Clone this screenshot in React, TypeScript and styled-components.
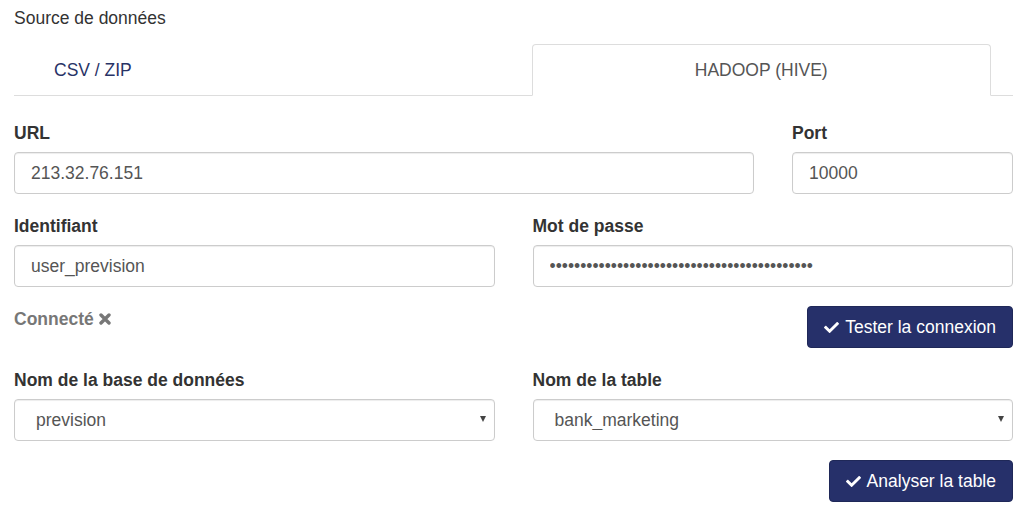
import React from "react";
import styled, { createGlobalStyle } from "styled-components";
import { FaCheck } from "react-icons/fa";

const GlobalStyle = createGlobalStyle`
  * { box-sizing: border-box; }
  body {
    margin: 0;
    background: #fff;
    font-family: "Liberation Sans", Arial, sans-serif;
    font-size: 17.5px;
    line-height: 26px;
    color: #333;
  }
`;

const TimesIcon = () => (
  <svg width="12" height="12" viewBox="0 0 12 12">
    <path
      d="M2 2 L10 10 M10 2 L2 10"
      stroke="currentColor"
      strokeWidth="3.4"
      strokeLinecap="round"
    />
  </svg>
);

const App = () => {
  return (
    <Page>
      <GlobalStyle />
      <Title>Source de données</Title>
      <Tabs>
        <Tab>CSV / ZIP</Tab>
        <Tab active>HADOOP (HIVE)</Tab>
      </Tabs>
      <Form>
        <Row columns="1fr 221px">
          <Field>
            <Label>URL</Label>
            <Input defaultValue="213.32.76.151" />
          </Field>
          <Field>
            <Label>Port</Label>
            <Input defaultValue="10000" />
          </Field>
        </Row>
        <Row columns="1fr 1fr">
          <Field>
            <Label>Identifiant</Label>
            <Input defaultValue="user_prevision" />
          </Field>
          <Field>
            <Label>Mot de passe</Label>
            <Input type="password" defaultValue={"x".repeat(43)} />
          </Field>
        </Row>
        <ActionRow>
          <Status>
            Connecté <TimesIcon />
          </Status>
          <Button>
            <FaCheck size={15} /> Tester la connexion
          </Button>
        </ActionRow>
        <Row columns="1fr 1fr">
          <Field>
            <Label>Nom de la base de données</Label>
            <SelectWrap>
              <Select defaultValue="prevision">
                <option value="prevision">prevision</option>
              </Select>
              <Caret />
            </SelectWrap>
          </Field>
          <Field>
            <Label>Nom de la table</Label>
            <SelectWrap>
              <Select defaultValue="bank_marketing">
                <option value="bank_marketing">bank_marketing</option>
              </Select>
              <Caret />
            </SelectWrap>
          </Field>
        </Row>
        <ButtonRow>
          <Button>
            <FaCheck size={15} /> Analyser la table
          </Button>
        </ButtonRow>
      </Form>
    </Page>
  );
};

export default App;

const Page = styled.div`
  padding: 5px 15px 10px 14px;
`;

const Title = styled.div`
  color: #333;
`;

const Tabs = styled.div`
  display: grid;
  grid-template-columns: 1fr 1fr;
  column-gap: 38px;
  margin-top: 13px;
  border-bottom: 1px solid #ddd;
`;

const Tab = styled.div<{ active?: boolean }>`
  height: 52px;
  line-height: 51px;
  margin-bottom: -1px;
  margin-left: ${(p) => (p.active ? "-1px" : "0")};
  padding-left: ${(p) => (p.active ? "0" : "39px")};
  margin-right: ${(p) => (p.active ? "22px" : "0")};
  text-align: ${(p) => (p.active ? "center" : "left")};
  color: ${(p) => (p.active ? "#555" : "#283366")};
  background: ${(p) => (p.active ? "#fff" : "transparent")};
  border: 1px solid ${(p) => (p.active ? "#ddd" : "transparent")};
  border-bottom-color: ${(p) => (p.active ? "#fff" : "transparent")};
  border-radius: 4px 4px 0 0;
`;

const Form = styled.div`
  display: flex;
  flex-direction: column;
  gap: 19px;
  margin-top: 24px;
`;

const Row = styled.div<{ columns: string }>`
  display: grid;
  grid-template-columns: ${(p) => p.columns};
  column-gap: 38px;
`;

const Field = styled.div`
  display: flex;
  flex-direction: column;
  gap: 6px;
`;

const Label = styled.label`
  font-weight: bold;
  color: #333;
`;

const Input = styled.input`
  height: 42px;
  width: 100%;
  padding: 0 16px;
  font-family: inherit;
  font-size: 17.5px;
  color: #555;
  background: #fff;
  border: 1px solid #ccc;
  border-radius: 4px;
  box-shadow: inset 0 1px 1px rgba(0, 0, 0, 0.075);
  outline: none;
`;

const SelectWrap = styled.div`
  position: relative;
`;

const Select = styled.select`
  appearance: none;
  height: 42px;
  width: 100%;
  padding: 0 21px;
  font-family: inherit;
  font-size: 17.5px;
  color: #555;
  background: #fff;
  border: 1px solid #ccc;
  border-radius: 4px;
  box-shadow: inset 0 1px 1px rgba(0, 0, 0, 0.075);
  outline: none;
`;

const Caret = styled.span`
  position: absolute;
  right: 9px;
  top: 17px;
  width: 0;
  height: 0;
  border-left: 3px solid transparent;
  border-right: 3px solid transparent;
  border-top: 6px solid #444;
`;

const ActionRow = styled.div`
  display: flex;
  justify-content: space-between;
  align-items: flex-start;
`;

const Status = styled.div`
  display: flex;
  align-items: center;
  gap: 5px;
  font-weight: bold;
  color: #777;
`;

const ButtonRow = styled.div`
  display: flex;
  justify-content: flex-end;
`;

const Button = styled.button`
  display: flex;
  align-items: center;
  gap: 6px;
  height: 42px;
  padding: 0 16px;
  font-family: inherit;
  font-size: 17.5px;
  color: #fff;
  background: #26306a;
  border: 1px solid #1f2858;
  border-radius: 4px;
  cursor: pointer;
`;
